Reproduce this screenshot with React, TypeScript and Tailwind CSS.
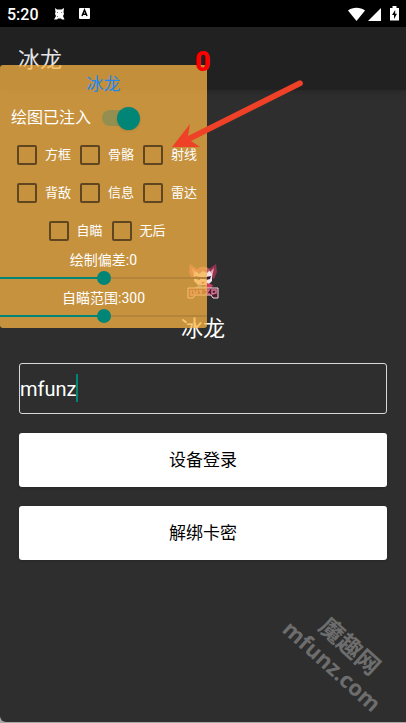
import { useState } from 'react';

interface CheckItemProps {
  label: string;
}

function CheckItem({ label }: CheckItemProps) {
  return (
    <label className="flex w-[63px] items-center gap-2 pl-2 text-[13px] leading-5 whitespace-nowrap text-white">
      <input
        type="checkbox"
        className="size-5 shrink-0 appearance-none rounded-xs border-2 border-[#5f4620] checked:bg-[#008577]"
      />
      {label}
    </label>
  );
}

interface SliderRowProps {
  label: string;
  min: number;
  max: number;
  initial: number;
}

function SliderRow({ label, min, max, initial }: SliderRowProps) {
  const [value, setValue] = useState(initial);
  const percent = ((value - min) / (max - min)) * 100;

  return (
    <label className="mb-0.5 block text-center text-sm leading-5 text-white">
      {label}:{value}
      <span className="grid h-4 items-center">
        <span className="col-start-1 row-start-1 h-0.5 bg-[#b38439]" />
        <span
          className="col-start-1 row-start-1 h-0.5 bg-[#008577]"
          style={{ width: `${percent}%` }}
        />
        <input
          type="range"
          min={min}
          max={max}
          value={value}
          onChange={(e) => setValue(Number(e.target.value))}
          className="col-start-1 row-start-1 h-3.5 w-full appearance-none bg-transparent [&::-webkit-slider-thumb]:size-3.5 [&::-webkit-slider-thumb]:appearance-none [&::-webkit-slider-thumb]:rounded-full [&::-webkit-slider-thumb]:bg-[#008577]"
        />
      </span>
    </label>
  );
}

function StatusBar() {
  return (
    <div className="flex h-[27px] items-center bg-black pr-[7px] pl-[7px] text-white">
      <span className="pt-0.5 text-base leading-5 font-medium">5:20</span>
      <svg className="ml-[15px] h-3 w-[11px]" viewBox="0 0 11 12" fill="currentColor">
        <path d="M1 0l2 1.500h4.500L10 0l-.5 4 .5 2-1 2 1.500 3.500H8l-1-1H4l-1 1H0L2 8 1 6l.5-2z" />
        <path d="M3 4h1v1H3zM7 4h1v1H7zM3 8h1v1H3z" fill="#777" />
      </svg>
      <svg className="ml-[14px] h-[13px] w-[11px]" viewBox="0 0 11 13">
        <rect y="1" width="11" height="11" rx="1" fill="#fff" />
        <path d="M3 9l2.500-6L8 9M4 7.200h3" fill="none" stroke="#000" strokeWidth="1.500" />
      </svg>
      <div className="ml-auto flex items-center gap-[3px]">
        <svg className="h-[14px] w-[17px]" viewBox="0 0 17 14" fill="currentColor">
          <path d="M8.500 14L0 3.500C4.500-.2 12.500-.2 17 3.500z" />
        </svg>
        <svg className="h-[14px] w-[13px]" viewBox="0 0 13 14" fill="currentColor">
          <path d="M13 1v13H0z" />
        </svg>
        <svg className="ml-[6px] h-[15px] w-[9px]" viewBox="0 0 9 15">
          <path d="M0 2h2.500V0h4v2H9v12.500H0z" fill="#fff" />
          <path d="M5.200 4L2 9h2v4l3-5.200H5.200z" fill="#000" />
        </svg>
      </div>
    </div>
  );
}

function Mascot() {
  return (
    <svg className="h-[38px] w-8" viewBox="0 0 32 38">
      <path d="M3 2l7 5 3 6-8 4-3-7z" fill="#b3485f" />
      <path d="M29 2l-7 5-3 6 8 4 3-7z" fill="#8f3350" />
      <path d="M27 6l-4 4-2 4 4 1zM5 6l4 4 2 4-4 1z" fill="#f0a0a8" />
      <path d="M7 12l4-5h10l4 5v7l-4 4H11l-4-4z" fill="#efe0ea" />
      <path d="M9 9c2-5 11-6 14-1l-3 3-4-2-4 3z" fill="#b05a74" />
      <path d="M8 14l5 1v3l-4-1zM24 14l-5 1v3l4-1z" fill="#2b1b35" />
      <path d="M14 20h4l-2 2z" fill="#8b3350" />
      <path d="M9 25l4-3 3 3 5-3 4 4H8z" fill="#6f91b5" />
      <path d="M20 21l6 2-2 4h-5z" fill="#cc3f65" />
      <path d="M1 26h30v10h-5l-2-3H8l-2 3H1z" fill="#4d1c33" stroke="#f7dce4" />
      <path
        d="M4 28v5h2l2-2-2-3M10 28v4M12 29h3M14 28v4M18 28h4l-3 4h4M25 28v4l4-1v-3z"
        fill="none"
        stroke="#d9718f"
        strokeWidth="1.500"
      />
    </svg>
  );
}

function FloatingPanel() {
  return (
    <section className="absolute top-[65px] left-0 h-[263px] w-[207px] rounded-[3px] bg-[#f9b444]/75">
      <h2 className="pt-2 text-center text-[17px] leading-[22px] text-[#1e88f0]">冰龙</h2>
      <label className="mt-3 flex h-[22px] items-center gap-[11px] pl-[11px] text-base leading-[22px] text-white">
        绘图已注入
        <span className="grid h-6 w-[38px] items-center">
          <input
            type="checkbox"
            role="switch"
            defaultChecked
            className="peer col-start-1 row-start-1 h-4 w-9 appearance-none rounded-full bg-[#948f50]"
          />
          <span className="pointer-events-none col-start-1 row-start-1 size-[23px] rounded-full bg-[#008577] shadow peer-checked:justify-self-end" />
        </span>
      </label>
      <div className="mt-4 flex flex-col gap-[18px]">
        <div className="flex justify-center">
          <CheckItem label="方框" />
          <CheckItem label="骨骼" />
          <CheckItem label="射线" />
        </div>
        <div className="flex justify-center">
          <CheckItem label="背敌" />
          <CheckItem label="信息" />
          <CheckItem label="雷达" />
        </div>
        <div className="flex justify-center">
          <CheckItem label="自瞄" />
          <CheckItem label="无后" />
        </div>
      </div>
      <div className="mt-[9px]">
        <SliderRow label="绘制偏差" min={-100} max={100} initial={0} />
        <SliderRow label="自瞄范围" min={0} max={600} initial={300} />
      </div>
    </section>
  );
}

export default function App() {
  return (
    <div className="relative flex min-h-screen flex-col overflow-hidden bg-[#a8a8a8] pb-px font-[Roboto,'Noto_Sans_CJK_SC',sans-serif]">
      <StatusBar />
      <header className="z-0 flex h-[63px] items-center bg-[#212121] px-[18px] shadow-md">
        <h1 className="pt-0.5 text-[22px] leading-8 text-[#e4e4e4]">冰龙</h1>
      </header>

      <main className="flex grow flex-col rounded-bl-md bg-[#2e2e2e] px-[19px] pt-[172px]">
        <div className="flex flex-col items-center gap-[13px]">
          <Mascot />
          <p className="text-[22px] leading-8 text-white">冰龙</p>
        </div>
        <div className="relative mt-[18px]">
          <input
            type="text"
            aria-label="卡密"
            defaultValue="mfunz"
            className="block h-[51px] w-full rounded-[3px] border border-[#d8d8d8] text-xl text-white outline-none"
          />
          <span className="absolute top-[11px] left-[57px] h-7 w-0.5 bg-[#008577]" />
        </div>
        <button type="button" className="mt-[19px] h-[54px] rounded-[3px] bg-white pt-0.5 text-[17px] text-black shadow">
          设备登录
        </button>
        <button type="button" className="mt-[19px] h-[54px] rounded-[3px] bg-white pt-0.5 text-[17px] text-black shadow">
          解绑卡密
        </button>
      </main>

      <FloatingPanel />

      <span className="absolute top-[46px] left-[195px] text-[27px] leading-8 font-black text-[#ff0000]">0</span>

      <svg className="pointer-events-none absolute top-[76px] left-[170px] h-[74px] w-[136px]" viewBox="0 0 136 74">
        <path d="M2 71L20 48l-2 12L129 4.500a3 3 0 0 1 3 5L21 65l9 6z" fill="#ee4127" />
      </svg>

      <div className="pointer-events-none absolute right-0 bottom-[42px] w-32 rotate-42 text-center font-['Open_Sans','Noto_Sans_CJK_SC',sans-serif] font-bold text-[#6d6d6d]">
        <p className="text-2xl leading-7">魔趣网</p>
        <p className="text-[22px] leading-6">mfunz.com</p>
      </div>
    </div>
  );
}
